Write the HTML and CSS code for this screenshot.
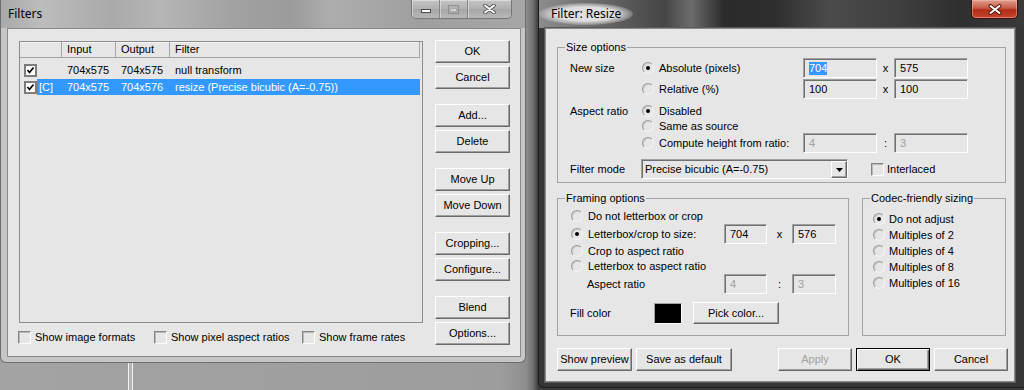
FILE: index.html
```html
<!DOCTYPE html>
<html>
<head>
    <title>Filters</title>
    <link rel="stylesheet" href="styles.css">
</head>
<body>
    <div class="bgline"></div>

    <!-- Filters list window (inactive) -->
    <div class="win filters">
        <div class="titlebar">
            <span class="title">Filters</span>
            <div class="caps">
                <span class="cap cmin"><svg width="10" height="5"><rect x="0.5" y="0.5" width="9" height="3" fill="#fff" stroke="#4a4a4a"/></svg></span>
                <span class="cap cmax"><svg width="11" height="9"><rect x="0.5" y="0.5" width="10" height="8" fill="none" stroke="#8e8e8e"/><rect x="2.5" y="3.5" width="6" height="3" fill="#d4d4d4" stroke="#a8a8a8"/></svg></span>
                <span class="cap cclose"><svg width="13" height="10"><path d="M2 1.5 L11 8.5 M11 1.5 L2 8.5" stroke="#555" stroke-width="3.6" stroke-linecap="round"/><path d="M2 1.5 L11 8.5 M11 1.5 L2 8.5" stroke="#fff" stroke-width="1.8" stroke-linecap="round"/></svg></span>
            </div>
        </div>
        <div class="client fclient">
            <div class="leftcol">
                <div class="list">
                    <div class="lhead">
                        <span class="hc c0"></span>
                        <span class="hc c1">Input</span>
                        <span class="hc c2">Output</span>
                        <span class="hc c3">Filter</span>
                    </div>
                    <div class="lrow">
                        <span class="chk on"><svg width="9" height="9"><path d="M1.5 4 L3.5 6.5 L7.5 1.5" fill="none" stroke="#000" stroke-width="1.7"/></svg></span>
                        <span class="cells">
                            <span class="c0"></span>
                            <span class="c1">704x575</span>
                            <span class="c2">704x575</span>
                            <span class="c3">null transform</span>
                        </span>
                    </div>
                    <div class="lrow r2">
                        <span class="chk on"><svg width="9" height="9"><path d="M1.5 4 L3.5 6.5 L7.5 1.5" fill="none" stroke="#000" stroke-width="1.7"/></svg></span>
                        <span class="cells sel">
                            <span class="c0">[C]</span>
                            <span class="c1">704x575</span>
                            <span class="c2">704x576</span>
                            <span class="c3">resize (Precise bicubic (A=-0.75))</span>
                        </span>
                    </div>
                </div>
                <div class="opts">
                    <span class="cb o1"><span class="chk"></span>Show image formats</span>
                    <span class="cb o2"><span class="chk"></span>Show pixel aspect ratios</span>
                    <span class="cb"><span class="chk"></span>Show frame rates</span>
                </div>
            </div>
            <div class="btncol">
                <div class="bgroup"><button class="b">OK</button><button class="b">Cancel</button></div>
                <div class="bgroup"><button class="b">Add...</button><button class="b">Delete</button></div>
                <div class="bgroup"><button class="b">Move Up</button><button class="b">Move Down</button></div>
                <div class="bgroup"><button class="b">Cropping...</button><button class="b">Configure...</button></div>
                <div class="bgroup"><button class="b">Blend</button><button class="b">Options...</button></div>
            </div>
        </div>
    </div>

    <!-- Resize filter dialog (active) -->
    <div class="win resize">
        <div class="titlebar rtitlebar">
            <span class="title rtitle">Filter: Resize</span>
            <span class="rclose"><svg width="14" height="11"><path d="M2.5 2 L11.5 9 M11.5 2 L2.5 9" stroke="#4a1208" stroke-width="3.8" stroke-linecap="round"/><path d="M2.5 2 L11.5 9 M11.5 2 L2.5 9" stroke="#fff" stroke-width="2" stroke-linecap="round"/></svg></span>
        </div>
        <div class="client rclient">
            <div class="grp size">
                <span class="gl">Size options</span>
                <div class="row h20">
                    <span class="lab">New size</span>
                    <span class="opt"><span class="rd on"></span>Absolute (pixels)</span>
                    <span class="ed w74"><span class="hl">704</span></span>
                    <span class="xs">x</span>
                    <span class="ed w74">575</span>
                </div>
                <div class="row h20 mt1">
                    <span class="lab"></span>
                    <span class="opt"><span class="rd"></span>Relative (%)</span>
                    <span class="ed w74">100</span>
                    <span class="xs">x</span>
                    <span class="ed w74">100</span>
                </div>
                <div class="row h16 mt4">
                    <span class="lab">Aspect ratio</span>
                    <span class="opt"><span class="rd on"></span>Disabled</span>
                </div>
                <div class="row h14">
                    <span class="lab"></span>
                    <span class="opt"><span class="rd"></span>Same as source</span>
                </div>
                <div class="row h20">
                    <span class="lab"></span>
                    <span class="opt"><span class="rd"></span>Compute height from ratio:</span>
                    <span class="ed w74 dis">4</span>
                    <span class="xs">:</span>
                    <span class="ed w74 dis">3</span>
                </div>
                <div class="row h20 mt6">
                    <span class="lab">Filter mode</span>
                    <span class="combo">Precise bicubic (A=-0.75)<span class="dd"><svg width="7" height="4"><polygon points="0,0 7,0 3.5,4" fill="#000"/></svg></span></span>
                    <span class="cb ilc"><span class="chk"></span>Interlaced</span>
                </div>
            </div>

            <div class="lower">
                <div class="grp frame">
                    <span class="gl">Framing options</span>
                    <div class="row h16">
                        <span class="opt"><span class="rd"></span>Do not letterbox or crop</span>
                    </div>
                    <div class="row h20">
                        <span class="opt w153"><span class="rd on"></span>Letterbox/crop to size:</span>
                        <span class="ed w43">704</span>
                        <span class="xs2">x</span>
                        <span class="ed w44">576</span>
                    </div>
                    <div class="row h14">
                        <span class="opt"><span class="rd"></span>Crop to aspect ratio</span>
                    </div>
                    <div class="row h16">
                        <span class="opt"><span class="rd"></span>Letterbox to aspect ratio</span>
                    </div>
                    <div class="row h20">
                        <span class="lab2">Aspect ratio</span>
                        <span class="ed w43 dis">4</span>
                        <span class="xs2">:</span>
                        <span class="ed w44 dis">3</span>
                    </div>
                    <div class="row h22 mt8">
                        <span class="lab3">Fill color</span>
                        <span class="swatch"></span>
                        <button class="b pick">Pick color...</button>
                    </div>
                </div>
                <div class="grp codec">
                    <span class="gl">Codec-friendly sizing</span>
                    <div class="row h16"><span class="opt g4"><span class="rd on"></span>Do not adjust</span></div>
                    <div class="row h16"><span class="opt g4"><span class="rd"></span>Multiples of 2</span></div>
                    <div class="row h16"><span class="opt g4"><span class="rd"></span>Multiples of 4</span></div>
                    <div class="row h16"><span class="opt g4"><span class="rd"></span>Multiples of 8</span></div>
                    <div class="row h16"><span class="opt g4"><span class="rd"></span>Multiples of 16</span></div>
                </div>
            </div>

            <div class="btnrow">
                <button class="b">Show preview</button>
                <button class="b w96">Save as default</button>
                <button class="b w74 apply">Apply</button>
                <button class="b w74 def">OK</button>
                <button class="b w74">Cancel</button>
            </div>
        </div>
    </div>
</body>
</html>
```

FILE: styles.css
```css
* {
    margin: 0;
    padding: 0;
    box-sizing: border-box;
}
body {
    width: 1024px;
    height: 390px;
    overflow: hidden;
    position: relative;
    font: 11px/13px "Liberation Sans", Arial, sans-serif;
    color: #000;
    background: linear-gradient(90deg, #a3a3a3 0, #9d9d9d 500px, #8e8e8e 526px, #707070 533px, #3c3c3c 538px);
}
button {
    font: inherit;
    color: inherit;
}

.bgline {
    position: absolute;
    left: 128px;
    top: 363px;
    width: 5px;
    height: 27px;
    border-left: 1px solid #f2f2f2;
    border-right: 1px solid #f2f2f2;
    background: #b4b4b4;
}

/* window frames */
.win {
    position: absolute;
    top: 0;
}
.titlebar {
    height: 28px;
    display: flex;
    align-items: flex-start;
}
.title {
    font: 12px/14px "Noto Sans", sans-serif;
    margin: 7px 0 0 1px;
}
.client {
    background: #e6e6e6;
    border: 1px solid #8a8a8a;
}

.filters {
    left: 0;
    width: 526px;
    height: 363px;
    border: 1px solid #6e6e6e;
    border-top: 0;
    border-radius: 0 0 6px 6px;
    padding: 0 4px 5px 6px;
    background:
        linear-gradient(180deg, rgba(0,0,0,0) 0, rgba(0,0,0,0) 28px, #c6c6c6 28px),
        linear-gradient(90deg, #a9a9a9 0, #bcbcbc 40px, #aaa 110px, #b5b5b5 160px, #a2a2a2 230px, #9b9b9b 290px, #adadad 330px, #9f9f9f 420px, #a6a6a6 526px);
}
.caps {
    display: flex;
    height: 19px;
    margin-left: auto;
    margin-right: 9px;
    border: 1px solid #767676;
    border-top: 0;
    border-radius: 0 0 5px 5px;
    overflow: hidden;
}
.cap {
    display: flex;
    align-items: center;
    justify-content: center;
    background: linear-gradient(180deg, #c4c4c4, #b0b0b0 50%, #a6a6a6 51%, #b8b8b8);
    box-shadow: inset 1px 1px rgba(255,255,255,0.4);
}
.cap + .cap {
    border-left: 1px solid #868686;
}
.cmin { width: 27px; padding-top: 5px; }
.cmax { width: 28px; }
.cclose { width: 44px; }

.fclient {
    height: 329px;
    display: flex;
    padding: 12px 10px 0 11px;
}
.leftcol {
    width: 404px;
}
.list {
    height: 282px;
    border: 1px solid #8c8c8c;
}
.lhead {
    display: flex;
    height: 16px;
}
.hc {
    border-right: 1px solid #a5a5a5;
    border-bottom: 1px solid #a5a5a5;
    box-shadow: inset 0 1px #f4f4f4;
    padding-left: 5px;
    line-height: 15px;
}
.hc.c0 { width: 42px; }
.hc.c1, .hc.c2 { width: 54px; }
.hc.c3 { width: 250px; }

.lrow {
    display: flex;
    align-items: center;
    height: 16px;
    margin-top: 4px;
    padding-left: 4px;
}
.lrow.r2 { margin-top: 1px; }
.cells {
    display: flex;
    height: 16px;
    align-items: center;
    width: 383px;
}
.cells.sel {
    background: #3399ff;
    color: #fff;
}
.cells .c0 { width: 25px; padding-left: 2px; }
.cells .c1, .cells .c2 { width: 54px; padding-left: 5px; }
.cells .c3 { width: 250px; padding-left: 5px; }

.opts {
    display: flex;
    margin: 8px 0 0 -1px;
}
.cb {
    display: flex;
    align-items: center;
    gap: 4px;
}
.o1 { width: 136px; }
.o2 { width: 148px; }

.chk {
    width: 13px;
    height: 13px;
    flex: none;
    border: 1px solid;
    border-color: #858585 #fdfdfd #fdfdfd #858585;
    box-shadow: inset 1px 1px #b8b8b8;
}
.chk.on {
    border: 2px solid #7c7c7c;
    background: #fff;
    box-shadow: none;
}
.chk svg { display: block; }

.btncol {
    margin: -1px 0 0 12px;
    display: flex;
    flex-direction: column;
    gap: 15px;
}
.bgroup {
    display: flex;
    flex-direction: column;
    gap: 3px;
}

/* buttons */
.b {
    width: 75px;
    height: 23px;
    background: #e6e6e6;
    border: 1px solid;
    border-color: #fff #696969 #696969 #fff;
    box-shadow: inset -1px -1px #a0a0a0;
    text-align: center;
}
.b.w96 { width: 96px; }
.b.w74 { width: 74px; }
.b.apply { color: #a2a2a2; margin-left: auto; }
.b.def {
    border-color: #000;
    box-shadow: inset 1px 1px #fff, inset -1px -1px #696969, inset -2px -2px #a0a0a0;
}

/* resize dialog */
.resize {
    left: 538px;
    width: 488px;
    height: 388px;
    border: 1px solid #1c1c1c;
    border-top: 0;
    border-radius: 0 0 0 6px;
    padding: 0 10px 5px 6px;
    background:
        linear-gradient(180deg, rgba(0,0,0,0) 0, rgba(0,0,0,0) 28px, #363636 28px),
        linear-gradient(90deg, #8c8c8c 0, #5e5e5e 80px, #454545 125px, #6c6c6c 152px, #2b2b2b 185px, #2e2e2e 235px, #4b4b4b 290px, #3f3f3f 360px, #2f2f2f 420px, #3a3a3a 488px);
}
.rtitle {
    margin: 3px 0 0 -6px;
    padding: 4px 12px;
    border-radius: 50%;
    background: radial-gradient(ellipse at center, rgba(228,228,228,0.95) 45%, rgba(200,200,200,0.5) 65%, rgba(160,160,160,0) 78%);
}
.rclose {
    width: 47px;
    height: 19px;
    margin-left: auto;
    margin-right: -3px;
    display: flex;
    align-items: center;
    justify-content: center;
    border: 1px solid #3e1208;
    border-top: 0;
    border-radius: 0 0 5px 5px;
    background: linear-gradient(180deg, #e0a090, #c75a44 45%, #b22c16 55%, #c4452c);
    box-shadow: inset 0 0 0 1px rgba(255,200,190,0.45);
}

.rclient {
    height: 354px;
    padding: 18px 6px 0 11px;
    box-shadow: 0 0 0 1px #5a5a5a;
}

.grp {
    position: relative;
    border: 1px solid #a3a3a3;
}
.gl {
    position: absolute;
    top: -7px;
    left: 7px;
    padding: 0 1px;
    background: #e6e6e6;
}
.row {
    display: flex;
    align-items: center;
}
.h14 { height: 14px; }
.h16 { height: 16px; }
.h20 { height: 20px; }
.h22 { height: 22px; }
.mt1 { margin-top: 1px; }
.mt4 { margin-top: 4px; }
.mt6 { margin-top: 6px; }
.mt8 { margin-top: 8px; }

.size {
    width: 449px;
    height: 136px;
    padding: 10px 0 0 12px;
}
.lab { width: 72px; }
.opt {
    width: 161px;
    display: flex;
    align-items: center;
    gap: 5px;
}
.opt.g4 { gap: 4px; }
.opt.w153 { width: 153px; }
.frame .opt:not(.w153) { width: auto; }
.codec .opt { width: auto; }

.rd {
    width: 12px;
    height: 12px;
    flex: none;
    position: relative;
    border-radius: 50%;
    border: 1px solid;
    border-color: #9a9a9a #f4f4f4 #f4f4f4 #9a9a9a;
    box-shadow: inset 1px 1px #cfcfcf;
}
.rd.on::after {
    content: "";
    position: absolute;
    left: 3px;
    top: 3px;
    width: 4px;
    height: 4px;
    border-radius: 50%;
    background: #000;
}

.ed {
    height: 20px;
    display: flex;
    align-items: center;
    padding-left: 5px;
    border: 1px solid;
    border-color: #a0a0a0 #fdfdfd #fdfdfd #a0a0a0;
    box-shadow: inset 1px 1px #707070;
}
.ed.dis { color: #a0a0a0; }
.w74 { width: 74px; }
.w43 { width: 43px; }
.w44 { width: 44px; }
.hl {
    background: #3399ff;
    color: #fff;
}
.xs {
    width: 17px;
    text-align: center;
}
.xs2 {
    width: 25px;
    text-align: center;
}

.combo {
    width: 207px;
    height: 20px;
    margin-left: -1px;
    display: flex;
    align-items: center;
    padding-left: 3px;
    border: 1px solid;
    border-color: #a0a0a0 #fdfdfd #fdfdfd #a0a0a0;
    box-shadow: inset 1px 1px #707070;
}
.dd {
    margin-left: auto;
    width: 16px;
    height: 17px;
    margin-top: 1px;
    display: flex;
    align-items: center;
    justify-content: center;
    border: 1px solid;
    border-color: #fff #696969 #696969 #fff;
    box-shadow: inset -1px -1px #a0a0a0;
}
.ilc { margin-left: 23px; gap: 3px; }

.lower {
    display: flex;
    gap: 13px;
    margin-top: 15px;
}
.frame {
    width: 292px;
    height: 138px;
    padding: 9px 0 0 13px;
}
.lab2 {
    width: 153px;
    padding-left: 16px;
}
.lab3 {
    width: 84px;
    margin-left: -1px;
}
.swatch {
    width: 28px;
    height: 21px;
    margin: 1px 11px 0 0;
    background: #000;
    border: 1px solid;
    border-color: #a0a0a0 #fdfdfd #fdfdfd #a0a0a0;
}
.b.pick {
    width: 86px;
    height: 22px;
}
.codec {
    width: 144px;
    height: 138px;
    padding: 12px 0 0 10px;
}

.btnrow {
    display: flex;
    gap: 4px;
    margin-top: 12px;
}
```
